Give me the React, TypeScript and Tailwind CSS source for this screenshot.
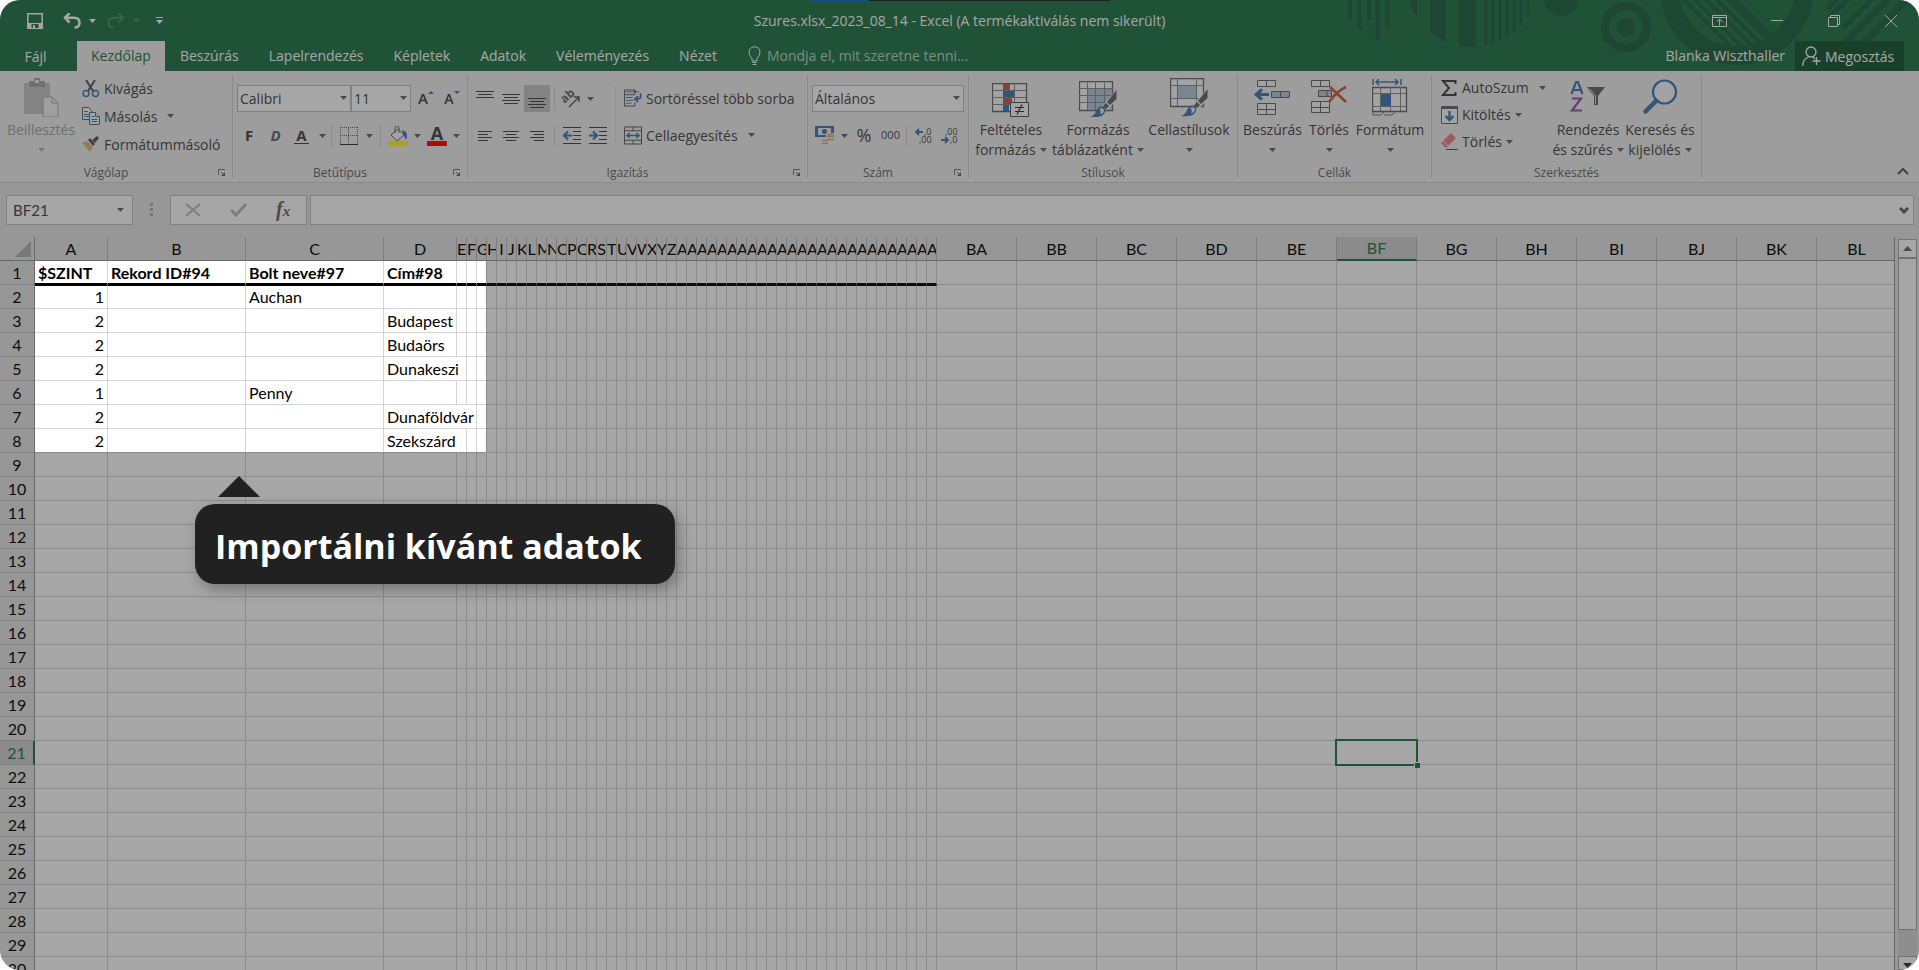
import React from "react";

type Kids = { children?: React.ReactNode };

const INK = "#444444";
const BLUE = "#3f78b5";

function Arrow({ color = "#666666" }: { color?: string }) {
  return (
    <svg width="7" height="4" viewBox="0 0 7 4" className="shrink-0" aria-hidden="true">
      <path d="M0 0h7L3.5 4z" fill={color} />
    </svg>
  );
}

function Divider() {
  return <span className="h-[22px] w-px shrink-0 bg-[#d0d0d0]" />;
}

function Group({ label, launcher, width, children }: Kids & { label: string; launcher?: boolean; width: string }) {
  return (
    <section aria-label={label} className={"flex shrink-0 pt-[3px] " + width}>
      <div className="flex min-w-0 flex-1 flex-col">
        <div className="flex flex-1">{children}</div>
        <div className={"relative flex h-5 items-center justify-center pt-px text-[12px] text-[#666666] " + (launcher ? "pr-5" : "")}>
          {label}
          {launcher && (
            <button aria-label={label + " beállításai"} className="absolute right-[6px] top-[7px]">
              <svg width="8" height="8" viewBox="0 0 8 8" fill="none" stroke="#777" aria-hidden="true">
                <path d="M.5 6V.5H7M3 3l3 3" />
                <path d="M7 3v4H3z" fill="#666" stroke="none" />
              </svg>
            </button>
          )}
        </div>
      </div>
      <span className="mt-px mb-1 w-px bg-[#d0d0d0]" />
    </section>
  );
}

function BigButton({ icon, lines, width, muted }: { icon: React.ReactNode; lines: string[]; width: string; muted?: boolean }) {
  return (
    <button className={"flex shrink-0 flex-col items-center text-[14px] leading-5 " + width + (muted ? " text-[#a0a0a0]" : " text-[#444444]")}>
      <span className="flex h-[46px] items-end pb-[3px]">{icon}</span>
      <span className="whitespace-nowrap">{lines[0]}</span>
      <span className="flex h-5 items-center gap-1 whitespace-nowrap">
        {lines[1]}
        <Arrow color={muted ? "#b5b5b5" : "#666666"} />
      </span>
    </button>
  );
}

function SmallButton({ icon, text, arrow, gap = "gap-1", height = "h-7" }: { icon: React.ReactNode; text: string; arrow?: boolean; gap?: string; height?: string }) {
  return (
    <button className={"flex items-center whitespace-nowrap text-[14px] text-[#444444] " + height + " " + gap}>
      <span className="flex items-center gap-1">
        <span className="flex w-[18px] justify-center">{icon}</span>
        {text}
      </span>
      {arrow && <Arrow />}
    </button>
  );
}

function Combo({ label, value, width, options }: { label: string; value: string; width: string; options: string[] }) {
  return (
    <div className={"relative h-[27px] shrink-0 " + width}>
      <select
        aria-label={label}
        defaultValue={value}
        className="h-full w-full appearance-none border border-[#c0c0c0] bg-white pl-[2px] text-[14px] text-[#444444]"
      >
        {options.map((o) => (
          <option key={o}>{o}</option>
        ))}
      </select>
      <span className="pointer-events-none absolute right-1 top-[11px]">
        <Arrow />
      </span>
    </div>
  );
}

function IconButton({ label, width, active, children }: Kids & { label: string; width: string; active?: boolean }) {
  return (
    <button aria-label={label} className={"flex h-[27px] shrink-0 items-center justify-center text-[#444444] " + width + (active ? " bg-[#c5c5c5]" : "")}>
      {children}
    </button>
  );
}

function Lines({ rows, w = 18, h = 18 }: { rows: [number, number, number][]; w?: number; h?: number }) {
  return (
    <svg width={w} height={h} viewBox={`0 0 ${w} ${h}`} stroke={INK} aria-hidden="true">
      {rows.map(([x1, x2, y]) => (
        <path key={y} d={`M${x1} ${y + 0.5}H${x2}`} />
      ))}
    </svg>
  );
}

/* ---------- ribbon icons ---------- */

const PasteIcon = () => (
  <svg width="36" height="40" viewBox="0 0 36 40" aria-hidden="true">
    <path d="M1 6h26v31H1z" fill="#c9c7c9" />
    <path d="M6 4h5V1h6v3h5v6H6z" fill="#a5a5a5" />
    <path d="M12 3h4v3h-4z" fill="#f1f1f1" />
    <path d="M20 20h9l6 6v14H20z" fill="#f6f4f6" stroke="#aaa" />
    <path d="M29 20v6h6" fill="none" stroke="#aaa" />
  </svg>
);

const ScissorsIcon = () => (
  <svg width="18" height="19" viewBox="0 0 18 19" fill="none" aria-hidden="true">
    <path d="M4 1l7 11M13 1L6 12" stroke="#555" strokeWidth="2" />
    <circle cx="4" cy="14.5" r="3" stroke={BLUE} strokeWidth="1.4" />
    <circle cx="13.5" cy="14.5" r="3" stroke={BLUE} strokeWidth="1.4" />
  </svg>
);

const CopyIcon = () => (
  <svg width="18" height="18" viewBox="0 0 18 18" fill="#fafafa" stroke="#666" aria-hidden="true">
    <path d="M.5.5h6l3 3v9h-9z" />
    <path d="M2 4.500h4M2 7.500h5M2 9.500h5" stroke={BLUE} />
    <path d="M7.500 5.500h6l4 4v8h-10z" />
    <path d="M13.500 5.500v4h4" />
    <path d="M9.500 9.500h3M9.500 12.500h6M9.500 14.500h6" stroke={BLUE} />
  </svg>
);

const BrushIcon = () => (
  <svg width="18" height="16" viewBox="0 0 18 16" aria-hidden="true">
    <path d="M0 7l5-2 6 6-3 5z" fill="#e3b87c" />
    <path d="M6 4l2-2 5 6-2 2z" fill="#555" />
    <path d="M10 4l5-4 2 2-4 5z" fill="#555" />
  </svg>
);

const BordersIcon = () => (
  <svg width="18" height="18" viewBox="0 0 18 18" fill="none" stroke="#666" aria-hidden="true">
    <path d="M.5 0v17M17.500 0v17M0 .5h18M8.500 1v16M0 8.500h18" strokeDasharray="1 1" />
    <path d="M0 17.500h18" stroke="#333" />
  </svg>
);

const FillIcon = () => (
  <svg width="20" height="20" viewBox="0 0 20 20" aria-hidden="true">
    <path d="M3 9l7-6 6 6-7 6z" fill="#fafafa" stroke="#666" />
    <path d="M7 7V2q0-2 2-2t2 2v5" fill="none" stroke="#666" />
    <path d="M14 4q5 1 5 6l-1 4-2-4z" fill={BLUE} />
    <path d="M0 15h20v5H0z" fill="#ffff00" />
  </svg>
);

const FontColorIcon = () => (
  <span className="flex w-5 flex-col items-center">
    <span className="text-[18px] font-bold leading-[15px]">A</span>
    <span className="h-[5px] w-5 bg-[#ff0000]" />
  </span>
);

const OrientationIcon = () => (
  <svg width="20" height="18" viewBox="0 0 20 18" aria-hidden="true">
    <text x="1" y="11" fontSize="12" fontWeight="700" fontFamily="Open Sans, sans-serif" fill="#666" transform="rotate(-42 6 9)">
      ab
    </text>
    <path d="M8 17L18 7M18 12V7h-5" stroke="#555" strokeWidth="1.400" fill="none" />
  </svg>
);

const IndentIcon = ({ right }: { right?: boolean }) => (
  <svg width="18" height="17" viewBox="0 0 18 17" fill="none" stroke={INK} aria-hidden="true">
    <path d="M0 .5h18M10 4.500h8M10 8.500h8M10 12.500h8M0 16.500h18" />
    <path d={right ? "M0 8.500h7M4 4.500l4 4-4 4" : "M1 8.500h8M5 4.500l-4 4 4 4"} stroke={BLUE} strokeWidth="2.200" />
  </svg>
);

const WrapIcon = () => (
  <svg width="19" height="18" viewBox="0 0 19 18" fill="none" aria-hidden="true">
    <path d="M.5.5h11v5H.5zM.5 5.500v12h11v-4M11.500.500v3" stroke="#555" />
    <path d="M2 2.500h14M2 8.500h7M2 11.500h8M2 14.500h6" stroke={BLUE} />
    <path d="M17.500 4v4q0 2-3 2h-2M15 7l-3.500 3 3.500 3" stroke={BLUE} strokeWidth="1.800" />
  </svg>
);

const MergeIcon = () => (
  <svg width="19" height="19" viewBox="0 0 19 19" fill="none" aria-hidden="true">
    <path d="M.5.500h18v18H.500zM.5 4.500h18M.5 14.500h18M9.500.500v4M9.500 14.500v4" stroke="#555" />
    <path d="M3 9.500h13M6 7L3 9.500 6 12M13 7l3 2.500-3 2.500" stroke={BLUE} strokeWidth="1.400" />
  </svg>
);

const MoneyIcon = () => (
  <svg width="20" height="19" viewBox="0 0 20 19" fill="none" aria-hidden="true">
    <path d="M0 0h19v11H0z" fill={BLUE} />
    <path d="M3 2h13v7H3z" fill="#eee" />
    <circle cx="9.500" cy="5.500" r="2.500" fill={BLUE} />
    <path d="M11 7h9v12H6v-6h5z" fill="#f1f1f1" />
    <path d="M12 8.500h7M12 10.500h7M12 13.500h7M7 14.500h6M7 17.500h6" stroke="#e0ab6a" strokeWidth="1.600" />
  </svg>
);

const DecimalIcon = ({ more }: { more?: boolean }) => (
  <svg width="18" height="18" viewBox="0 0 18 18" aria-hidden="true" fontFamily="Open Sans, sans-serif" fontSize="9" fill="#444">
    <text x={more ? 9 : 4} y="8">{more ? ",0" : ",00"}</text>
    <text x={more ? 4 : 9} y="16">{more ? ",00" : ",0"}</text>
    <path d={more ? "M1 5h7M4 2L1 5l3 3" : "M0 13h7M4 10l3 3-3 3"} fill="none" stroke={BLUE} strokeWidth="1.800" />
  </svg>
);

const CondIcon = () => (
  <svg width="38" height="34" viewBox="0 0 38 34" fill="none" aria-hidden="true">
    <path d="M.5.500h34v28H.500z" fill="#fafafa" stroke="#666" strokeWidth="1.300" />
    <path d="M0 7.500h34M0 14.500h34M0 21.500h34M11.500 0v28M22.500 0v28" stroke="#888" />
    <path d="M11 1h7v6h-7zM11 15h9v6h-9z" fill="#d2573a" />
    <path d="M11 8h11v6H11zM11 22h6v6h-6z" fill={BLUE} />
    <path d="M18.500 19.500h18v14h-18z" fill="#fafafa" stroke="#555" />
    <path d="M23 24.500h9M23 28.500h9M30 21.500l-5 10" stroke="#333" strokeWidth="1.200" />
  </svg>
);

const PaintBrush = () => (
  <g>
    <path d="M38 8v10L29 29l-6-4z" fill="#f1f1f1" />
    <path d="M37.500 9v9L31 24l-3-3z" fill="#666" />
    <path d="M27 22l3 3-3 3-3-3z" fill="#666" />
    <path d="M11 36q5-2 6-6 3-6 8-4 3 4-1 8-4 3-13 2z" fill={BLUE} />
    <path d="M20 28q4-2 5 1 0 4-4 4 2-3-1-5z" fill="#f4f4f4" />
  </g>
);

const TableFormatIcon = () => (
  <svg width="38" height="36" viewBox="0 0 38 36" fill="none" aria-hidden="true">
    <path d="M.5.500h33v29H.500z" fill="#fafafa" stroke="#666" strokeWidth="1.300" />
    <path d="M9 8h24v21H9z" fill="#b5c8dd" />
    <path d="M0 7.500h34M0 14.500h34M0 21.500h34M8.500 0v29M16.500 0v29M25.500 0v29" stroke="#8a8a8a" />
    <PaintBrush />
  </svg>
);

const CellStyleIcon = () => (
  <svg width="38" height="39" viewBox="0 0 38 39" fill="none" aria-hidden="true">
    <path d="M.5.500h33v28H.500z" fill="#fafafa" stroke="#666" strokeWidth="1.300" />
    <path d="M0 7.500h34M0 20.500h34M7.500 0v28M26.500 0v28" stroke="#8a8a8a" />
    <path d="M8 8h18v12H8z" fill="#b5c8dd" />
    <g transform="translate(0 2)">
      <PaintBrush />
    </g>
  </svg>
);

const InsertIcon = () => (
  <svg width="38" height="37" viewBox="0 0 38 37" fill="none" stroke="#666" aria-hidden="true">
    <path d="M3.500.500h18v6h-18zM12.500.500v6M3.500 23.500h18v11h-18zM3.500 29.500h18M12.500 23.500v11" fill="#f8f8f8" />
    <path d="M17.500 11.500h18v6h-18zM26.500 11.500v6" fill="#b5c8dd" />
    <path d="M2 14.500h13M8 9.500l-6 5 6 5" stroke={BLUE} strokeWidth="3" />
  </svg>
);

const DeleteIcon = () => (
  <svg width="36" height="37" viewBox="0 0 36 37" fill="none" stroke="#666" aria-hidden="true">
    <path d="M.5.500h18v6H.500zM9.500.500v6M.5 21.500h18v11H.500zM.5 27.500h18M9.500 21.500v11" fill="#f8f8f8" />
    <path d="M7.500 10.500h13v6h-13zM16 10.500v6" fill="#b5c8dd" />
    <path d="M19 7l16 15M35 7q-9 4-17 15" stroke="#d2573a" strokeWidth="2.600" />
  </svg>
);

const FormatIcon = () => (
  <svg width="36" height="38" viewBox="0 0 36 38" fill="none" aria-hidden="true">
    <path d="M1 0v6M29 0v6M4 3h22M7 0L4 3l3 3M23 0l3 3-3 3" stroke={BLUE} strokeWidth="1.500" />
    <path d="M.5 8.500h34v24H.500z" fill="#fafafa" stroke="#666" strokeWidth="1.300" />
    <path d="M0 14.500h34M0 27.500h34M8.500 8v24M18.500 8v24M28.500 8v24" stroke="#8a8a8a" />
    <path d="M9 15h10v12H9z" fill={BLUE} />
    <path d="M1 33v3h8l3-3M12 36h8l4-4" stroke="#777" />
  </svg>
);

const SigmaIcon = () => (
  <svg width="16" height="16" viewBox="0 0 16 16" fill="none" stroke="#444" strokeWidth="2" aria-hidden="true">
    <path d="M14.500 4V1H2l6 7-6 7h12.500v-3" />
  </svg>
);

const FillDownIcon = () => (
  <svg width="17" height="18" viewBox="0 0 17 18" fill="none" aria-hidden="true">
    <path d="M.5.500h16v17H.500z" fill="#fafafa" stroke="#666" />
    <path d="M0 2h17" stroke="#666" strokeWidth="2" />
    <path d="M8.500 5v9M4.500 10l4 4 4-4" stroke={BLUE} strokeWidth="2.400" />
  </svg>
);

const EraserIcon = () => (
  <svg width="18" height="17" viewBox="0 0 18 17" aria-hidden="true">
    <path d="M1 10L11 0l5 5L6 15z" fill="#e8828f" />
    <path d="M3 8l5 5" stroke="#f1f1f1" />
    <path d="M6 16.500h12" stroke="#555" />
  </svg>
);

const SortIcon = () => (
  <svg width="36" height="37" viewBox="0 0 36 37" fill="none" aria-hidden="true">
    <path d="M1.500 14L6 2h2l4.500 12M3 10h8" stroke={BLUE} strokeWidth="2.200" />
    <path d="M2 18.500h9L2 30.500h10" stroke="#9352a8" strokeWidth="2.200" />
    <path d="M17 7h18l-7 9v9h-4v-9z" fill="#666" />
    <path d="M20 9l5.500 7v8" stroke="#ddd" />
  </svg>
);

const SearchIcon = () => (
  <svg width="36" height="38" viewBox="0 0 36 38" fill="none" stroke={BLUE} aria-hidden="true">
    <circle cx="22.500" cy="13" r="11.500" strokeWidth="2.200" fill="#f8f8f8" />
    <path d="M14 22L3.500 32.500" strokeWidth="4.500" strokeLinecap="round" />
  </svg>
);

/* ---------- title bar ---------- */

function BannerArt() {
  const P = "#1c623e";
  return (
    <svg className="absolute right-0 top-0" width="579" height="71" viewBox="1340 0 579 71" aria-hidden="true">
      <defs>
        <clipPath id="disc">
          <circle cx="1472" cy="-19" r="66" />
        </clipPath>
        <clipPath id="bowl">
          <circle cx="1737" cy="-12" r="60" />
        </clipPath>
      </defs>
      <path d="M1350 0v20M1359.500 0v29M1369 0v20M1377.500 0v40M1387.500 0v26" stroke={P} strokeWidth="4" />
      <g clipPath="url(#disc)" fill={P}>
        <path d="M1400 0h17v50h-17zM1430 0h16v50h-16zM1459 0h17v50h-17z" />
        <path d="M1486 0v50M1493 0v50M1500 0v50M1507 0v50M1514 0v50M1521 0v50M1528 0v50M1534 0v50" stroke={P} strokeWidth="3" />
      </g>
      <circle cx="1561" cy="-1" r="17" fill={P} />
      <circle cx="1626" cy="27" r="21" fill="none" stroke={P} strokeWidth="8.500" />
      <circle cx="1626" cy="27" r="9" fill={P} />
      <circle cx="1737" cy="-12" r="67.500" fill="none" stroke={P} strokeWidth="19" />
      <g clipPath="url(#bowl)" stroke={P} strokeWidth="4">
        <path d="M1680-4l62 62M1691-4l62 62M1702-4l62 62M1713-4l62 62" />
        <path d="M1728-4l62 62" strokeWidth="9" />
      </g>
      <path d="M1827 9l14-14M1827 20l25-25M1843 28l34-34" stroke={P} strokeWidth="5" />
      <path d="M1846 41l46-46M1860 46l50-50" stroke={P} strokeWidth="7" />
    </svg>
  );
}

function TitleBar() {
  return (
    <header className="relative h-[71px] shrink-0 bg-[#217346] text-white">
      <BannerArt />
      <div className="absolute left-[809px] top-0 flex h-px w-[301px]">
        <span className="w-[60px] bg-[#0078d7]" />
        <span className="flex-1 bg-[#202020]" />
      </div>
      <div className="relative grid h-[41px] grid-cols-[1fr_auto_1fr] items-center">
        <div className="flex items-center pl-[27px]">
          <button aria-label="Mentés" className="mr-5">
            <svg width="16" height="16" viewBox="0 0 16 16" fill="none" stroke="#fff" strokeWidth="1.500" aria-hidden="true">
              <path d="M.8.800h14.400v14.400H.800z" />
              <path d="M1 10h14v5H1z" fill="#fff" stroke="none" />
              <path d="M4.500 15v-4h7v4z" fill="#217346" stroke="none" />
              <path d="M6 12h2v3H6z" fill="#fff" stroke="none" />
            </svg>
          </button>
          <button aria-label="Visszavonás" className="mr-2">
            <svg width="18" height="16" viewBox="0 0 18 16" fill="none" stroke="#fff" strokeWidth="2.600" aria-hidden="true">
              <path d="M6.500 0L2 4.800l4.500 4.700M2 4.800h9q5.500 0 5.500 5 0 4.700-5 4.700" />
            </svg>
          </button>
          <Arrow color="#ffffff" />
          <button aria-label="Ismét" className="ml-[11px] mr-2" disabled>
            <svg width="18" height="16" viewBox="0 0 18 16" fill="none" stroke="#4d9068" strokeWidth="2" aria-hidden="true">
              <path d="M11.500 0L16 4.800l-4.500 4.700M16 4.800H7q-5.500 0-5.500 5 0 4.700 5 4.700" />
            </svg>
          </button>
          <Arrow color="#4d9068" />
          <button aria-label="Gyorselérési eszköztár testreszabása" className="ml-4">
            <svg width="7" height="8" viewBox="0 0 7 8" aria-hidden="true">
              <path d="M0 .5h7" stroke="#fff" />
              <path d="M0 3h7L3.500 7z" fill="#fff" />
            </svg>
          </button>
        </div>
        <h1 className="whitespace-nowrap text-[14px]">Szures.xlsx_2023_08_14 - Excel (A termékaktiválás nem sikerült)</h1>
        <div className="flex items-center justify-end pr-[22px]">
          <button aria-label="Menüszalag megjelenítése" className="mr-11">
            <svg width="15" height="12" viewBox="0 0 15 12" fill="none" stroke="#fff" aria-hidden="true">
              <path d="M.5.500h14v11H.500zM.5 2.500h14M7.500 10.500v-6M4.500 7l3-3 3 3" />
            </svg>
          </button>
          <button aria-label="Kis méret" className="mr-[45px]">
            <svg width="12" height="12" viewBox="0 0 12 12" stroke="#fff" aria-hidden="true">
              <path d="M0 5.500h12" />
            </svg>
          </button>
          <button aria-label="Előző méret" className="mr-[45px]">
            <svg width="12" height="12" viewBox="0 0 12 12" fill="none" stroke="#fff" aria-hidden="true">
              <path d="M.5 2.500h9v9h-9zM2.500 2.500v-2h9v9h-2" />
            </svg>
          </button>
          <button aria-label="Bezárás">
            <svg width="12" height="12" viewBox="0 0 12 12" stroke="#fff" aria-hidden="true">
              <path d="M0 0l12 12M12 0L0 12" />
            </svg>
          </button>
        </div>
      </div>
      <nav className="relative flex h-[30px] items-stretch text-[14px]">
        <button className="w-[77px] pr-[6px]">Fájl</button>
        <button className="bg-[#f1f1f1] px-[14px] pb-[2px] text-[#217346]">Kezdőlap</button>
        {["Beszúrás", "Lapelrendezés", "Képletek", "Adatok", "Véleményezés", "Nézet"].map((t) => (
          <button key={t} className="px-[15px] pb-[2px]">
            {t}
          </button>
        ))}
        <label className="ml-4 flex items-center gap-[6px] pb-[2px]">
          <svg width="13" height="19" viewBox="0 0 13 19" fill="none" stroke="#fff" aria-hidden="true">
            <path d="M4 15v-2.500q-3-3-3-6 .3-5.500 5.500-5.700Q11.700 1 12 6.500q0 3-3 6V15z" />
            <path d="M4.500 16.500h4M4.500 18.500h4" />
          </svg>
          <input
            aria-label="Mondja el, mit szeretne tenni"
            placeholder="Mondja el, mit szeretne tenni..."
            className="w-[230px] bg-transparent placeholder:text-[#bcd5c7]"
          />
        </label>
        <div className="ml-auto flex items-stretch pr-[15px]">
          <button className="mr-[10px] pb-[2px]">Blanka Wiszthaller</button>
          <button className="flex w-[109px] items-center gap-1 bg-[#14582f] pl-[7px]">
            <svg width="19" height="20" viewBox="0 0 19 20" fill="none" stroke="#fff" strokeWidth="1.300" aria-hidden="true">
              <circle cx="9" cy="6" r="5" />
              <path d="M.7 20q0-7 6-9M11 11l2 2M14.500 11v8M10.500 15h8" />
            </svg>
            Megosztás
          </button>
        </div>
      </nav>
    </header>
  );
}

/* ---------- ribbon ---------- */

function Ribbon() {
  return (
    <div className="relative flex h-[112px] shrink-0 border-b border-[#d2d2d2] bg-[#f1f1f1]">
      <Group label="Vágólap" launcher width="w-[233px]">
        <BigButton icon={<PasteIcon />} lines={["Beillesztés", ""]} width="w-[82px]" muted />
        <div className="flex flex-col items-start">
          <SmallButton icon={<ScissorsIcon />} text="Kivágás" />
          <SmallButton icon={<CopyIcon />} text="Másolás" arrow gap="gap-[10px]" />
          <SmallButton icon={<BrushIcon />} text="Formátummásoló" />
        </div>
      </Group>

      <Group label="Betűtípus" launcher width="w-[235px]">
        <div className="flex flex-col gap-[10px] pt-[11px] pl-1">
          <div className="flex items-center">
            <Combo label="Betűtípus" value="Calibri" width="w-[114px]" options={["Calibri", "Arial"]} />
            <Combo label="Betűméret" value="11" width="w-[60px]" options={["11", "12"]} />
            <IconButton label="Betűméret növelése" width="w-[30px]">
              <span className="text-[15px] font-semibold">A</span>
              <svg width="6" height="16" viewBox="0 0 6 16" aria-hidden="true">
                <path d="M0 3h6L3 0z" fill={BLUE} />
              </svg>
            </IconButton>
            <IconButton label="Betűméret csökkentése" width="w-[22px]">
              <span className="text-[14px] font-semibold">A</span>
              <svg width="6" height="16" viewBox="0 0 6 16" aria-hidden="true">
                <path d="M0 0h6L3 3z" fill={BLUE} />
              </svg>
            </IconButton>
          </div>
          <div className="flex items-center">
            <IconButton label="Félkövér" width="w-6">
              <span className="text-[15px] font-bold">F</span>
            </IconButton>
            <IconButton label="Dőlt" width="w-[29px]">
              <span className="text-[15px] font-bold italic text-[#666666]">D</span>
            </IconButton>
            <IconButton label="Aláhúzott" width="w-[23px]">
              <span className="border-b border-[#444444] px-[2px] text-[15px] font-bold leading-4">A</span>
            </IconButton>
            <IconButton label="Aláhúzás típusa" width="w-[18px]">
              <Arrow />
            </IconButton>
            <Divider />
            <IconButton label="Szegélyek" width="w-[34px]">
              <BordersIcon />
            </IconButton>
            <Arrow />
            <span className="w-[7px]" />
            <Divider />
            <IconButton label="Kitöltőszín" width="w-[33px]">
              <FillIcon />
            </IconButton>
            <Arrow />
            <IconButton label="Betűszín" width="w-[32px]">
              <FontColorIcon />
            </IconButton>
            <Arrow />
          </div>
        </div>
      </Group>

      <Group label="Igazítás" launcher width="w-[340px]">
        <div className="flex flex-col gap-[10px] pt-[11px] pl-1">
          <div className="flex items-center">
            <IconButton label="Felülre" width="w-[26px]">
              <Lines rows={[[0, 18, 4], [2, 16, 7], [0, 18, 10]]} h={24} />
            </IconButton>
            <IconButton label="Középre függőlegesen" width="w-[26px]">
              <Lines rows={[[0, 18, 4], [2, 16, 7], [0, 18, 10], [2, 16, 13]]} />
            </IconButton>
            <IconButton label="Alulra" width="w-[26px]" active>
              <Lines rows={[[0, 18, 9], [2, 16, 12], [0, 18, 15], [2, 16, 18]]} h={20} />
            </IconButton>
            <span className="w-1" />
            <Divider />
            <IconButton label="Tájolás" width="w-[32px]">
              <OrientationIcon />
            </IconButton>
            <Arrow />
          </div>
          <div className="flex items-center">
            <IconButton label="Balra" width="w-[26px]">
              <Lines rows={[[2, 16, 4], [2, 12, 7], [2, 16, 10], [2, 12, 13]]} />
            </IconButton>
            <IconButton label="Középre" width="w-[26px]">
              <Lines rows={[[1, 17, 4], [4, 14, 7], [1, 17, 10], [4, 14, 13]]} />
            </IconButton>
            <IconButton label="Jobbra" width="w-[26px]">
              <Lines rows={[[2, 16, 4], [6, 16, 7], [2, 16, 10], [6, 16, 13]]} />
            </IconButton>
            <span className="w-1" />
            <Divider />
            <IconButton label="Behúzás csökkentése" width="w-[34px]">
              <IndentIcon />
            </IconButton>
            <IconButton label="Behúzás növelése" width="w-[18px]">
              <IndentIcon right />
            </IconButton>
          </div>
        </div>
        <span className="mt-[13px] ml-2 h-14 w-px bg-[#dcdcdc]" />
        <div className="flex flex-col gap-[9px] pt-[10px] pl-2">
          <SmallButton icon={<WrapIcon />} text="Sortöréssel több sorba" />
          <SmallButton icon={<MergeIcon />} text="Cellaegyesítés" arrow gap="gap-[10px]" />
        </div>
      </Group>

      <Group label="Szám" launcher width="w-[161px]">
        <div className="flex flex-col gap-[10px] pt-[11px] pl-1">
          <Combo label="Számformátum" value="Általános" width="w-[152px]" options={["Általános", "Szám"]} />
          <div className="flex items-center">
            <IconButton label="Könyvelési számformátum" width="w-[26px]">
              <MoneyIcon />
            </IconButton>
            <span className="w-[3px]" />
            <Arrow />
            <IconButton label="Százalék" width="w-[32px]">
              <span className="text-[18px]">%</span>
            </IconButton>
            <IconButton label="Ezres csoport" width="w-[21px]">
              <span className="text-[11px]">000</span>
            </IconButton>
            <span className="w-[5px]" />
            <Divider />
            <IconButton label="Tizedesjegyek növelése" width="w-[34px]">
              <DecimalIcon more />
            </IconButton>
            <IconButton label="Tizedesjegyek csökkentése" width="w-[18px]">
              <DecimalIcon />
            </IconButton>
          </div>
        </div>
      </Group>

      <Group label="Stílusok" width="w-[269px]">
        <BigButton icon={<CondIcon />} lines={["Feltételes", "formázás"]} width="w-[84px]" />
        <BigButton icon={<TableFormatIcon />} lines={["Formázás", "táblázatként"]} width="w-[90px]" />
        <BigButton icon={<CellStyleIcon />} lines={["Cellastílusok", ""]} width="w-[92px]" />
      </Group>

      <Group label="Cellák" width="w-[194px]">
        <BigButton icon={<InsertIcon />} lines={["Beszúrás", ""]} width="w-[69px]" />
        <BigButton icon={<DeleteIcon />} lines={["Törlés", ""]} width="w-[44px]" />
        <BigButton icon={<FormatIcon />} lines={["Formátum", ""]} width="w-[78px]" />
      </Group>

      <Group label="Szerkesztés" width="w-[270px]">
        <div className="flex w-[120px] flex-col items-start pl-2">
          <SmallButton icon={<SigmaIcon />} text="AutoSzum" arrow gap="gap-[10px]" height="h-[27px]" />
          <SmallButton icon={<FillDownIcon />} text="Kitöltés" arrow height="h-[27px]" />
          <SmallButton icon={<EraserIcon />} text="Törlés" arrow height="h-[27px]" />
        </div>
        <BigButton icon={<SortIcon />} lines={["Rendezés", "és szűrés"]} width="w-[72px]" />
        <BigButton icon={<SearchIcon />} lines={["Keresés és", "kijelölés"]} width="w-[72px]" />
      </Group>

      <button aria-label="Menüszalag összecsukása" className="mr-[10px] mb-[7px] ml-auto self-end">
        <svg width="12" height="7" viewBox="0 0 12 7" fill="none" stroke="#555" strokeWidth="2" aria-hidden="true">
          <path d="M1 6l5-5 5 5" />
        </svg>
      </button>
    </div>
  );
}

/* ---------- formula bar ---------- */

function FormulaBar() {
  return (
    <div className="flex h-[54px] shrink-0 items-start bg-[#e6e6e6] pt-3 pr-[5px] pl-[6px] font-['Lato',sans-serif]">
      <div className="relative h-[30px] w-[127px] shrink-0">
        <input aria-label="Név mező" defaultValue="BF21" className="h-full w-full border border-[#c0c0c0] bg-white pl-[6px] text-[15px] text-[#444444]" />
        <span className="absolute right-[9px] top-[13px]">
          <Arrow />
        </span>
      </div>
      <svg width="3" height="13" viewBox="0 0 3 13" className="mx-[17px] mt-2 shrink-0" fill="#b0b0b0" aria-hidden="true">
        <path d="M0 0h3v3H0zM0 5h3v3H0zM0 10h3v3H0z" />
      </svg>
      <div className="flex h-[30px] w-[137px] shrink-0 items-center border border-[#c0c0c0] bg-white pl-[14px]">
        <button aria-label="Mégse" className="mr-[29px]">
          <svg width="16" height="14" viewBox="0 0 16 14" fill="none" stroke="#bdbdbd" strokeWidth="2" aria-hidden="true">
            <path d="M1 1l14 12M15 1L1 13" />
          </svg>
        </button>
        <button aria-label="Beírás" className="mr-7">
          <svg width="18" height="14" viewBox="0 0 18 14" fill="none" stroke="#bdbdbd" strokeWidth="3" aria-hidden="true">
            <path d="M1 7l5 5L16 1" />
          </svg>
        </button>
        <button aria-label="Függvény beszúrása" className="font-['Liberation_Serif',serif] text-[20px] font-bold italic leading-6 text-[#666666]">
          f<span className="text-[15px]">x</span>
        </button>
      </div>
      <div className="relative ml-[3px] h-[30px] flex-1">
        <input aria-label="Szerkesztőléc" className="h-full w-full border border-[#c0c0c0] bg-white px-2 text-[15px]" />
        <svg width="10" height="7" viewBox="0 0 10 7" className="absolute right-[5px] top-3" fill="none" stroke="#666" strokeWidth="3" aria-hidden="true">
          <path d="M1 1l4 4 4-4" />
        </svg>
      </div>
    </div>
  );
}

/* ---------- worksheet ---------- */

const colName = (i: number): string => (i < 26 ? "" : String.fromCharCode(64 + Math.floor(i / 26))) + String.fromCharCode(65 + (i % 26));

const COLS = Array.from({ length: 64 }, (_, i) => colName(i));
const ROWS = Array.from({ length: 30 }, (_, i) => i + 1);

const DATA: Record<string, string> = {
  A1: "$SZINT", B1: "Rekord ID#94", C1: "Bolt neve#97", D1: "Cím#98",
  A2: "1", C2: "Auchan",
  A3: "2", D3: "Budapest",
  A4: "2", D4: "Budaörs",
  A5: "2", D5: "Dunakeszi",
  A6: "1", C6: "Penny",
  A7: "2", D7: "Dunaföldvár",
  A8: "2", D8: "Szekszárd",
};

/* Cells whose right gridline is hidden by text running over it. */
const SPILL = ["D5", "D7", "E7", "D8"];

function colWidth(i: number) {
  if (i === 0 || i === 3) return "w-[73px]";
  if (i < 3) return "w-[138px]";
  return i < 52 ? "w-[10px]" : "w-20";
}

function Sheet() {
  return (
    <div className="flex min-h-0 flex-1 bg-[#e6e6e6] font-['Lato',sans-serif]">
      <div className="min-w-0 flex-1 overflow-hidden border-r border-[#999999]">
        <table className="w-[1897px] table-fixed border-separate border-spacing-0 text-[16px] leading-[22px] text-black">
          <colgroup>
            <col className="w-[35px]" />
            {COLS.map((c, i) => (
              <col key={c} className={colWidth(i)} />
            ))}
          </colgroup>
          <thead>
            <tr className="h-6">
              <th className="border-r border-b border-[#9a9a9a] bg-[#e6e6e6] p-0">
                <svg width="16" height="16" viewBox="0 0 16 16" className="ml-[15px]" aria-hidden="true">
                  <path d="M16 0v16H0z" fill="#b4b4b4" />
                </svg>
              </th>
              {COLS.map((c, i) => {
                const picked = c === "BF";
                /* Narrow columns have room for the first letter only. */
                const narrow = i > 3 && i < 52;
                return (
                  <th
                    key={c}
                    scope="col"
                    aria-label={c}
                    className={
                      "border-r p-0 font-normal " +
                      (picked ? "border-b-2 border-r-[#b5b5b5] border-b-[#217346] bg-[#d2d2d2] text-[#217346]" : "border-b border-r-[#bcbcbc] border-b-[#9a9a9a]")
                    }
                  >
                    <span className="block h-[22px] overflow-hidden text-center">{narrow ? c[0] : c}</span>
                  </th>
                );
              })}
            </tr>
          </thead>
          <tbody>
            {ROWS.map((r) => (
              <tr key={r} className="h-6">
                <th
                  scope="row"
                  className={
                    "border-b border-b-[#bcbcbc] p-0 text-center font-normal " +
                    (r === 21 ? "border-r-2 border-r-[#217346] bg-[#d2d2d2] text-[#217346]" : "border-r border-r-[#9a9a9a]")
                  }
                >
                  {r}
                </th>
                {COLS.map((c, i) => {
                  const id = c + r;
                  const value = DATA[id];
                  const ruled = i < 52;
                  const bottom = r === 1 && ruled ? "border-b-2 border-b-black " : "border-b border-b-[#d4d4d4] ";
                  const top = r === 2 && ruled ? "border-t border-t-black " : "";
                  const right = SPILL.includes(id) ? "border-r border-r-white " : "border-r border-r-[#d4d4d4] ";
                  const align = i === 0 && r > 1 ? "pr-[3px] text-right " : value ? "pl-[3px] " : "";
                  return (
                    <td
                      key={c}
                      className={
                        "whitespace-nowrap bg-white pt-0 align-bottom " +
                        bottom + top + right + align +
                        (value ? "" : "px-0 ") +
                        (id === "BF21" ? "relative " : "") +
                        (r === 1 ? "pb-0 font-bold" : "pb-px")
                      }
                    >
                      {value && <span className="block h-[21px] leading-[21px]">{value}</span>}
                      {id === "BF21" && (
                        <span className="absolute -inset-[2px] border-2 border-[#217346]">
                          <span className="absolute -right-[4px] -bottom-[4px] h-[6px] w-[6px] border-t border-l border-white bg-[#217346]" />
                        </span>
                      )}
                    </td>
                  );
                })}
              </tr>
            ))}
          </tbody>
        </table>
      </div>
      <div className="flex w-6 shrink-0 flex-col bg-[#e6e6e6] pt-[2px] pr-[2px] pl-[3px]">
        <button aria-label="Görgetés felfelé" className="flex h-[19px] items-center justify-center border border-[#a8a8a8] bg-white">
          <svg width="9" height="5" viewBox="0 0 9 5" aria-hidden="true">
            <path d="M0 5h9L4.500 0z" fill="#666" />
          </svg>
        </button>
        <div className="flex-1 bg-[#d8d8d8] pb-[26px]">
          <div className="h-full border border-[#a8a8a8] bg-white" />
        </div>
        <button aria-label="Görgetés lefelé" className="flex h-[14px] items-end justify-center border border-[#a8a8a8] bg-white pb-[1px]">
          <svg width="9" height="5" viewBox="0 0 9 5" aria-hidden="true">
            <path d="M0 0h9L4.500 5z" fill="#333" />
          </svg>
        </button>
      </div>
    </div>
  );
}

export default function App() {
  return (
    <div className="relative flex h-screen flex-col overflow-hidden rounded-[20px] font-['Open_Sans',sans-serif]">
      <TitleBar />
      <Ribbon />
      <FormulaBar />
      <Sheet />
      <div className="pointer-events-none absolute left-[35px] top-[261px] h-[191px] w-[451px] shadow-[0_0_0_4000px_rgba(33,33,33,0.4)]" />
      <div role="tooltip" className="absolute left-[195px] top-[476px]">
        <svg width="42" height="21" viewBox="0 0 42 21" className="ml-[23px]" aria-hidden="true">
          <path d="M21 0l21 21H0z" fill="#212121" />
        </svg>
        <p className="mt-[7px] flex h-20 w-[480px] items-center rounded-[20px] bg-[#212121] pt-1 pl-5 text-[34px] font-bold whitespace-nowrap text-white shadow-[4px_6px_14px_rgba(33,33,33,0.35)]">
          Importálni kívánt adatok
        </p>
      </div>
    </div>
  );
}
